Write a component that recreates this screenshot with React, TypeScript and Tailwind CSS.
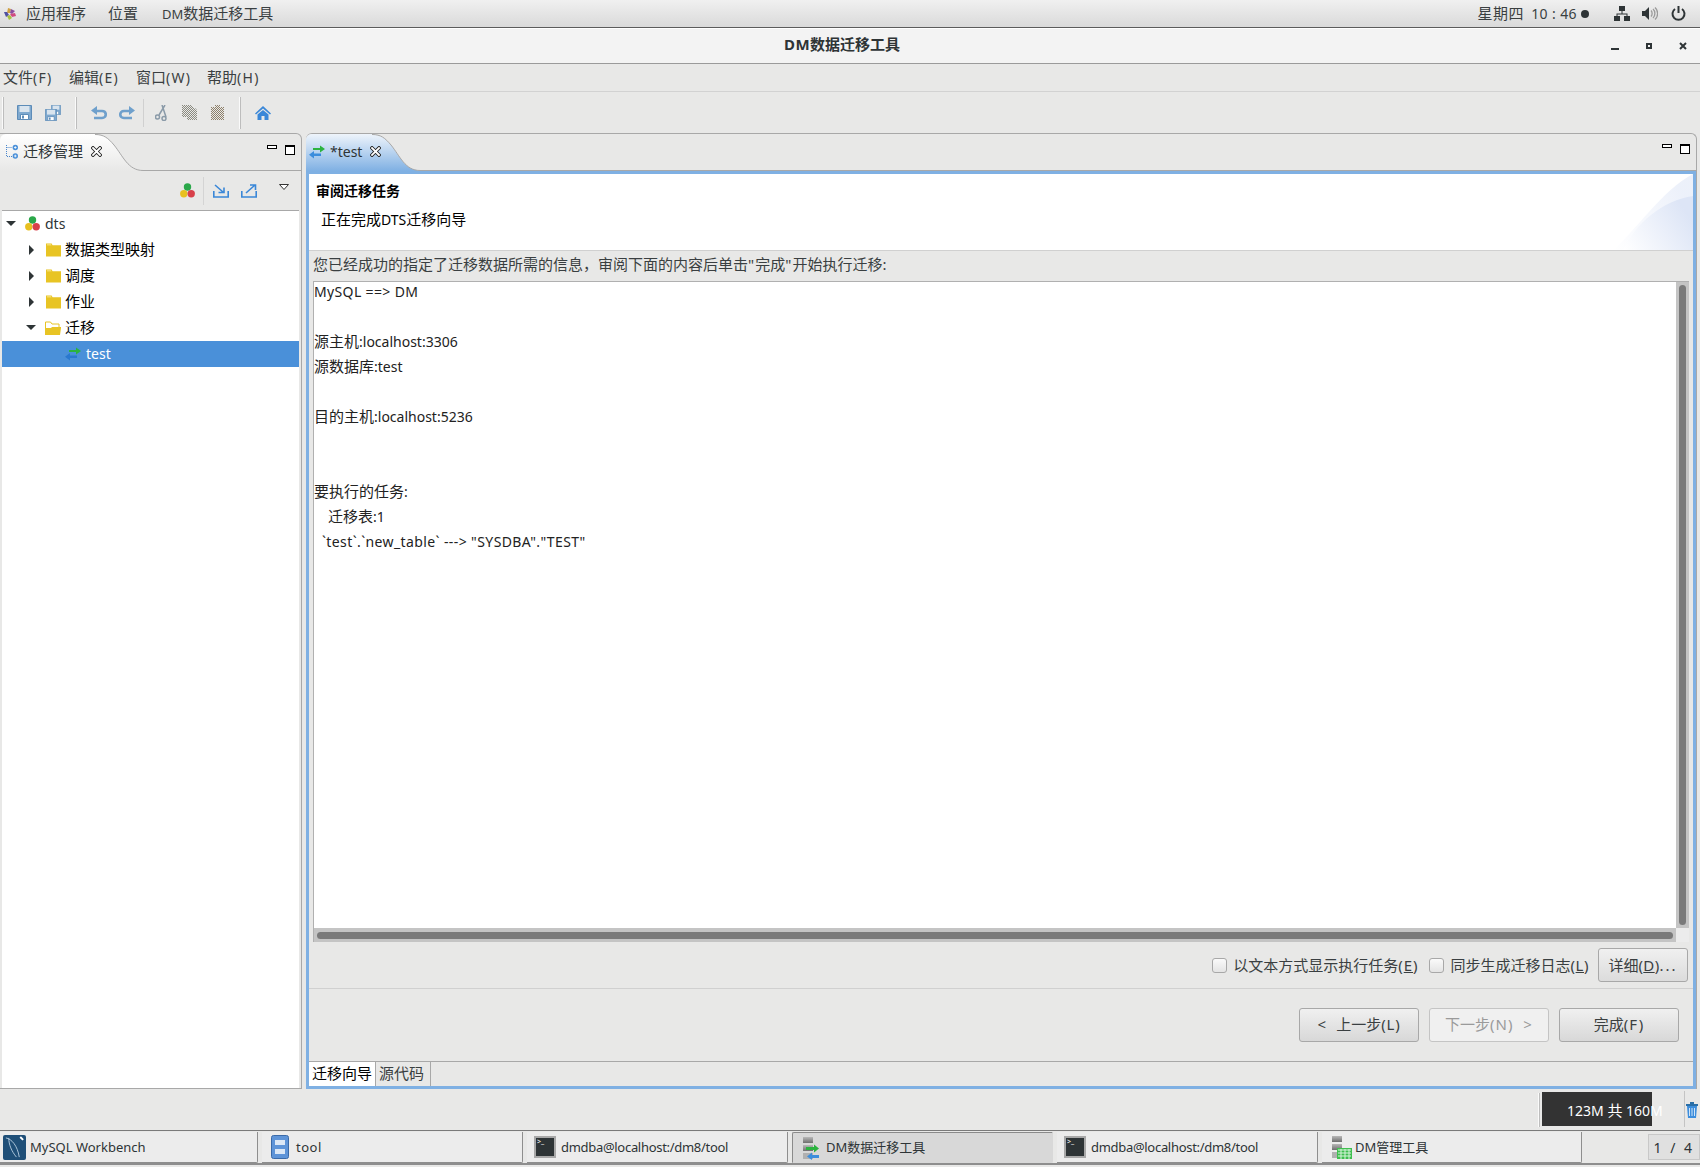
import React from "react";

const FONT = "[font-family:'Noto_Sans','Noto_Sans_CJK_SC',sans-serif]";

function Mix({ text, cjk = "text-[15px]", latin = "" }: { text: string; cjk?: string; latin?: string }) {
  const parts = text.split(/([\u3000-\u9fff\uff00-\uffef]+)/);
  return (
    <>
      {parts.map((p, i) =>
        /[\u3000-\u9fff\uff00-\uffef]/.test(p) ? (
          <span key={i} className={cjk}>{p}</span>
        ) : (
          <span key={i} className={latin}>{p}</span>
        )
      )}
    </>
  );
}

const Arrows = ({ className = "", blue = "#3c8ddc" }: { className?: string; blue?: string }) => (
  <svg viewBox="0 0 16 14" className={className}>
    <path d="M4 3h7V.4L16 4l-5 3.600V5H4z" fill="#2bb33f" />
    <path d="M12 8.600H5V6L0 9.800l5 3.800V11h7z" fill={blue} />
  </svg>
);

const Dots = ({ className = "" }: { className?: string }) => (
  <svg viewBox="0 0 15 15" className={className}>
    <circle cx="7.500" cy="4" r="3.700" fill="#2ba84a" />
    <circle cx="3.800" cy="10.800" r="3.700" fill="#e8c020" />
    <circle cx="11.200" cy="10.800" r="3.700" fill="#d8404a" />
  </svg>
);

const Folder = ({ open }: { open?: boolean }) =>
  open ? (
    <svg viewBox="0 0 16 14" className="w-[16px] h-[14px] shrink-0">
      <path d="M.5 13.500V1h5l1.500 2h7v3" fill="#fff" stroke="#e8c424" />
      <path d="M0 14V7h6l1-1h9v1l-1 7z" fill="#e8c424" />
    </svg>
  ) : (
    <svg viewBox="0 0 16 14" className="w-[15px] h-[14px] shrink-0">
      <path d="M0 14V0h6l1 2h9v12z" fill="#e8c424" />
      <path d="M1 1h4.400l.5 1H1z" fill="#fff3b0" />
    </svg>
  );

const Save = ({ className = "" }: { className?: string }) => (
  <svg viewBox="0 0 15 15" className={className}>
    <path d="M.5.5h14v14H.5z" fill="#7fa9cf" stroke="#5d8cb8" />
    <path d="M2.500 1h10v6h-10z" fill="#d9e4ee" />
    <path d="M3.500 9.500h8v5h-8z" fill="#fff" stroke="#5d8cb8" />
    <path d="M5 10.500h2v3H5z" fill="#5d8cb8" />
  </svg>
);

const Dither = ({ id, color }: { id: string; color: string }) => (
  <defs>
    <pattern id={id} width="2" height="2" patternUnits="userSpaceOnUse">
      <rect width="1" height="1" fill={color} />
      <rect x="1" y="1" width="1" height="1" fill={color} />
    </pattern>
  </defs>
);

const Min = () => <span className="block w-[10px] h-[4px] border border-black bg-white" />;
const Max = () => (
  <span className="block w-[10px] h-[10px] border border-black border-t-[2px] bg-white" />
);

const CloseX = () => (
  <svg viewBox="0 0 11 11" className="block w-[11px] h-[11px]">
    <path d="M2 2l7 7M9 2L2 9" stroke="#222" strokeWidth="3.600" strokeLinecap="square" />
    <path d="M2 2l7 7M9 2L2 9" stroke="#fff" strokeWidth="1.800" strokeLinecap="square" />
  </svg>
);

const Sep = ({ className = "" }: { className?: string }) => (
  <span className={`block w-[2px] bg-[#fafafa] border-r border-[#bdbdbd] ${className}`} />
);

const CURVE_FILL = "M0 .5C9 .5 13 4 19 11C28 22 33 36.500 48 36.500V37H0z";
const CURVE_LINE = "M0 .5C9 .5 13 4 19 11C28 22 33 36.500 48 36.500";

function Tree() {
  const folders = ["数据类型映射", "调度", "作业"];
  const row = "h-[26px] flex items-center pb-[1px]";
  return (
    <div className="flex-1 bg-white mx-[2px] text-[#2e3436]">
      <div className={`${row} pl-[4px]`}>
        <span className="w-0 h-0 border-x-[5px] border-x-transparent border-t-[5px] border-t-[#2e3436]" />
        <Dots className="w-[15px] h-[15px] ml-[9px]" />
        <span className="ml-[5px] text-[14px]">dts</span>
      </div>
      {folders.map((f) => (
        <div key={f} className={`${row} pl-[27px]`}>
          <span className="w-0 h-0 border-y-[5px] border-y-transparent border-l-[5px] border-l-[#2e3436]" />
          <span className="ml-[12px]"><Folder /></span>
          <span className="ml-[4px] text-[15px] text-black">{f}</span>
        </div>
      ))}
      <div className={`${row} pl-[24px]`}>
        <span className="w-0 h-0 border-x-[5px] border-x-transparent border-t-[5px] border-t-[#2e3436]" />
        <span className="ml-[9px]"><Folder open /></span>
        <span className="ml-[4px] text-[15px] text-black">迁移</span>
      </div>
      <div className="h-[26px] flex items-center pl-[63px] pb-[1px] bg-[#4a90d9]">
        <Arrows className="w-[16px] h-[14px]" blue="#2a78cf" />
        <span className="ml-[5px] text-[14px] text-white">test</span>
      </div>
    </div>
  );
}

function TaskBtn({
  w,
  active,
  icon,
  label,
  latin = "",
  gap = "ml-[4px]",
}: {
  w: string;
  active?: boolean;
  icon: React.ReactNode;
  label: string;
  latin?: string;
  gap?: string;
}) {
  return (
    <div
      className={`${w} h-[31px] shrink-0 flex items-center pl-[3px] text-[13px] text-[#2e3436] border-r border-b rounded-br-[2px] ${
        active ? "bg-[#d8d8d8] border-[#d8d8d8] border-l-[#8a8a8a] border-l border-t border-t-[#8a8a8a] rounded-tl-[2px]" : "bg-[#ececec] border-[#8e8e8e]"
      }`}
    >
      {icon}
      <span className={`${gap} pt-[1px]`}><Mix text={label} cjk="text-[13px]" latin={latin} /></span>
    </div>
  );
}

const Term = () => (
  <span className="block w-[22px] h-[22px] ml-[4px] bg-[#2e3436] border-[2px] border-[#a8a8a8] text-[7px] leading-[8px] text-white pl-[1px]">&gt;_</span>
);

const Stack = ({ overlay }: { overlay: React.ReactNode }) => (
  <span className="block w-[24px] h-[24px] ml-[4px]">
    <svg viewBox="0 0 24 24" className="w-[24px] h-[24px]">
      <defs>
        <linearGradient id="stk" x1="0" y1="0" x2="0" y2="1">
          <stop offset="0" stopColor="#b8b8b8" />
          <stop offset="1" stopColor="#6e6e6e" />
        </linearGradient>
      </defs>
      <rect x="3" y="1" width="10" height="6" fill="url(#stk)" />
      <rect x="3" y="9" width="10" height="6" fill="url(#stk)" />
      <rect x="3" y="17" width="10" height="6" fill="#b0b0b0" />
      {overlay}
    </svg>
  </span>
);

export default function App() {
  const lines: [string, string, string][] = [
    ["MySQL ==> DM", "", "tracking-[0.36px]"],
    ["", "", ""],
    ["源主机:localhost:3306", "", ""],
    ["源数据库:test", "", ""],
    ["", "", ""],
    ["目的主机:localhost:5236", "", ""],
    ["", "", ""],
    ["", "", ""],
    ["要执行的任务:", "", ""],
    ["迁移表:1", "pl-[14px]", ""],
    ["`test`.`new_table` ---> \"SYSDBA\".\"TEST\"", "pl-[8px]", "tracking-[0.4px]"],
  ];
  return (
    <div className={`w-[1700px] h-[1167px] overflow-hidden flex flex-col bg-[#e8e8e7] text-[14px] text-[#2e3436] ${FONT}`}>
      {/* GNOME top bar */}
      <div className="h-[28px] shrink-0 flex items-center bg-gradient-to-b from-[#f0f0f0] to-[#dadada] border-b border-[#5c5c5c] text-[15px] text-[#3a3f41]">
        <svg viewBox="0 0 14 14" className="w-[14px] h-[14px] ml-[3px]">
          <path d="M5 1l3 1-1 4H4z" fill="#d0a040" />
          <path d="M8 2l4 2-3 3-2-1z" fill="#8a4ea0" />
          <path d="M1 5l3 0 2 3-3 2z" fill="#5050a0" />
          <path d="M7 7l5-1 1 3-4 1z" fill="#d04a80" />
          <path d="M4 9l3-1 2 3-3 2z" fill="#a8c040" />
        </svg>
        <span className="ml-[9px]">应用程序</span>
        <span className="ml-[22px]">位置</span>
        <span className="ml-[24px]"><span className="text-[13px]">DM</span>数据迁移工具</span>
        <div className="ml-auto flex items-center">
          <span className="tracking-[0.5px]">星期四</span>
          <span className="ml-[7px] text-[14px] tracking-[0.4px] whitespace-pre">{"10 : 46"}</span>
          <span className="ml-[4px] w-[8px] h-[8px] rounded-full bg-[#2e3436]" />
          <svg viewBox="0 0 16 15" className="w-[16px] h-[15px] ml-[25px]" fill="#2e3436">
            <path d="M5 0h6v5H5zM0 10h6v5H0zM10 10h6v5h-6z" />
            <path d="M7.500 5h1v2.500H13.500V10h-1V8.500h-9V10h-1V7.500h5z" />
          </svg>
          <svg viewBox="0 0 16 15" className="w-[16px] h-[15px] ml-[12px]">
            <path d="M0 5h3l4-4v13l-4-4H0z" fill="#2e3436" />
            <path d="M9 4.500c1.500 1.500 1.500 4.500 0 6M11 3c2.500 2 2.500 7 0 9M13 1.500c3.500 3 3.500 9 0 12" fill="none" stroke="#9a9a9a" strokeWidth="1.300" />
          </svg>
          <svg viewBox="0 0 15 15" className="w-[15px] h-[15px] ml-[13px] mr-[14px]" fill="none" stroke="#2e3436" strokeWidth="2">
            <path d="M4 3a6 6 0 1 0 7 0" />
            <path d="M7.500 0v7" />
          </svg>
        </div>
      </div>

      {/* title bar */}
      <div className="h-[36px] shrink-0 flex items-center justify-center relative bg-[#f3f3f3] border-t border-white border-b border-b-[#9a9a9a] text-[15px] font-bold text-[#2e3436] pb-[3px]">
        <span className="ml-[-16px]"><Mix text="DM数据迁移工具" latin="tracking-[0.5px]" /></span>
        <div className="absolute right-[13px] top-[13px] flex items-center">
          <span className="block w-[8px] h-[2px] mt-[6px] bg-[#2e3436]" />
          <span className="block w-[6px] h-[6px] ml-[27px] border-[2px] border-[#2e3436]" />
          <svg viewBox="0 0 8 8" className="w-[8px] h-[8px] ml-[27px]"><path d="M1 1l6 6M7 1L1 7" stroke="#2e3436" strokeWidth="2" /></svg>
        </div>
      </div>

      {/* menu bar */}
      <div className="h-[28px] shrink-0 flex items-center border-b border-[#d2d2d2] pl-[3px] text-[#3a3f41]">
        <span className="w-[66px]"><Mix text="文件(F)" latin="tracking-[1.3px]" /></span>
        <span className="w-[67px]"><Mix text="编辑(E)" latin="tracking-[1.3px]" /></span>
        <span className="w-[71px]"><Mix text="窗口(W)" latin="tracking-[1.3px]" /></span>
        <span><Mix text="帮助(H)" latin="tracking-[1.3px]" /></span>
      </div>

      {/* toolbar */}
      <div className="h-[41px] shrink-0 flex items-center">
        <Sep className="ml-[2px] h-[32px]" />
        <Save className="w-[15px] h-[15px] ml-[13px]" />
        <span className="relative block w-[16px] h-[16px] ml-[13px]">
          <Save className="absolute right-0 top-0 w-[10px] h-[10px]" />
          <Save className="absolute left-0 bottom-0 w-[12px] h-[12px]" />
        </span>
        <Sep className="ml-[14px] h-[32px]" />
        <svg viewBox="0 0 16 14" className="w-[16px] h-[14px] ml-[14px]" fill="none">
          <path d="M3 5h8c5 0 5 7 0 7H3" stroke="#6fa0cc" strokeWidth="2.600" />
          <path d="M6 0v9L0 4.500z" fill="#6fa0cc" />
        </svg>
        <svg viewBox="0 0 16 14" className="w-[16px] h-[14px] ml-[12px]" fill="none">
          <path d="M13 5H5c-5 0-5 7 0 7h8" stroke="#6fa0cc" strokeWidth="2.600" />
          <path d="M10 0v9l6-4.500z" fill="#6fa0cc" />
        </svg>
        <span className="block w-[1px] h-[28px] ml-[8px] bg-[#d0d0d0]" />
        <svg viewBox="0 0 12 16" className="w-[12px] h-[16px] ml-[11px]" fill="none" stroke="#8a9aa8" strokeWidth="1.500">
          <path d="M10 0L4 10M7 0l4 12" />
          <circle cx="2.500" cy="12" r="2" />
          <circle cx="9" cy="13.500" r="2" />
        </svg>
        <svg viewBox="0 0 15 15" className="w-[15px] h-[15px] ml-[15px]">
          <Dither id="cp" color="#8a8a80" />
          <path d="M0 0h9l2 2v10H0z" fill="url(#cp)" />
          <path d="M5 3h8l2 2v10H5z" fill="url(#cp)" />
        </svg>
        <svg viewBox="0 0 13 15" className="w-[13px] h-[15px] ml-[14px]">
          <Dither id="pt" color="#8e806a" />
          <path d="M0 2h4V0h5v2h4v13H0z" fill="url(#pt)" />
        </svg>
        <Sep className="ml-[15px] h-[32px]" />
        <svg viewBox="0 0 16 14" className="w-[16px] h-[14px] ml-[14px]" fill="#3a87d8">
          <path d="M8 0L0 7.500l1 1L8 2.500l7 6 1-1z" />
          <path d="M2.500 8.500L8 4l5.500 4.500V14H9.500V10h-3v4h-4z" />
        </svg>
      </div>

      {/* panels */}
      <div className="flex-1 min-h-0 flex">
        {/* left */}
        <div className="w-[302px] shrink-0 flex flex-col border-r border-t border-b border-[#a8a8a8] rounded-tr-[6px]">
          <div className="h-[37px] shrink-0 flex">
            <div className="w-[95px] shrink-0 relative z-10 bg-gradient-to-b from-white to-[#e8e8e7] rounded-tl-[6px] flex items-center pl-[5px] pb-[2px]">
              <svg viewBox="0 0 13 15" className="w-[13px] h-[15px] shrink-0">
                <path d="M1.500 1v11.500h6M1.500 3.500h6" fill="none" stroke="#4a86cc" strokeDasharray="1 1" />
                <circle cx="10.300" cy="3.500" r="2.700" fill="#4a90d9" />
                <circle cx="10.300" cy="12" r="2.700" fill="#4a90d9" />
                <path d="M9 3.500h2.600M10.300 2.200v2.600M9 12h2.600M10.300 10.700v2.600" stroke="#fff" strokeWidth="0.800" />
              </svg>
              <span className="ml-[5px] text-[15px] whitespace-nowrap shrink-0">迁移管理</span>
              <span className="ml-[8px] shrink-0"><CloseX /></span>
            </div>
            <svg viewBox="0 0 48 37" className="w-[48px] h-[37px] shrink-0">
              <defs>
                <linearGradient id="lt" x1="0" y1="0" x2="0" y2="1">
                  <stop offset="0" stopColor="#ffffff" />
                  <stop offset="1" stopColor="#e8e8e7" />
                </linearGradient>
              </defs>
              <path d={CURVE_FILL} fill="url(#lt)" />
              <path d={CURVE_LINE} fill="none" stroke="#a8a8a8" />
            </svg>
            <div className="flex-1 border-b border-[#a8a8a8] flex justify-end items-start pt-[11px] pr-[6px] gap-[8px]">
              <Min />
              <Max />
            </div>
          </div>
          <div className="h-[40px] shrink-0 flex items-center pl-[178px] ml-[2px] mr-[2px] border-b border-[#a8a8a8]">
            <Dots className="w-[15px] h-[15px]" />
            <span className="block w-px h-[28px] bg-[#d4d4d4] ml-[8px]" />
            <svg viewBox="0 0 16 14" className="w-[16px] h-[14px] ml-[9px]" fill="none" stroke="#3a87d8" strokeWidth="1.600">
              <path d="M.8 7v6h14.400V7M2 1l8 7M11 3.500V8.500H5.500" />
            </svg>
            <svg viewBox="0 0 16 14" className="w-[16px] h-[14px] ml-[12px]" fill="none" stroke="#3a87d8" strokeWidth="1.600">
              <path d="M.8 7v6h14.400V7M5 9l9-8M9 1h5.500v5" />
            </svg>
            <svg viewBox="0 0 10 6" className="w-[10px] h-[6px] ml-[22px] mb-[8px]">
              <path d="M.5.5h9L5 5.500z" fill="#fff" stroke="#333" />
            </svg>
          </div>
          <Tree />
        </div>

        {/* right */}
        <div className="w-[1391px] ml-[4px] shrink-0 flex flex-col border-t border-r border-[#a8a8a8] rounded-t-[6px]">
          <div className="h-[37px] shrink-0 flex">
            <div className="w-[66px] shrink-0 relative z-10 bg-gradient-to-b from-[#eef4fb] to-[#7fb0e3] rounded-tl-[6px] flex items-center pl-[3px] pb-[2px]">
              <Arrows className="w-[16px] h-[14px] shrink-0" />
              <span className="ml-[5px] shrink-0">*test</span>
              <span className="ml-[8px] shrink-0"><CloseX /></span>
            </div>
            <svg viewBox="0 0 48 37" className="w-[48px] h-[37px] shrink-0">
              <defs>
                <linearGradient id="tb" x1="0" y1="0" x2="0" y2="1">
                  <stop offset="0" stopColor="#eef4fb" />
                  <stop offset="1" stopColor="#7fb0e3" />
                </linearGradient>
              </defs>
              <path d={CURVE_FILL} fill="url(#tb)" />
              <path d={CURVE_LINE} fill="none" stroke="#a8a8a8" />
            </svg>
            <div className="flex-1 border-b border-[#a8a8a8] flex justify-end items-start pt-[10px] pr-[6px] gap-[8px]">
              <Min />
              <Max />
            </div>
          </div>
          <div className="flex-1 min-h-0 flex flex-col border-[3px] border-[#7fb0e3]">
            {/* wizard banner */}
            <div className="h-[77px] shrink-0 relative overflow-hidden bg-white border-b border-[#d0d0d0] pt-[7px] pl-[7px] text-black">
              <div className="text-[14px] font-bold leading-[20px]">审阅迁移任务</div>
              <div className="mt-[8px] pl-[5px] leading-[20px]"><Mix text="正在完成DTS迁移向导" /></div>
              <svg viewBox="0 0 80 76" className="absolute right-0 top-0 w-[80px] h-[76px]">
                <defs>
                  <linearGradient id="bn" x1="0" y1="1" x2="1" y2="0.500">
                    <stop offset="0" stopColor="#ffffff" />
                    <stop offset="1" stopColor="#dde5f6" />
                  </linearGradient>
                </defs>
                <path d="M0 76C20 60 50 15 80 0v76z" fill="url(#bn)" opacity="0.550" />
                <path d="M10 76C22 50 50 26 80 22v54z" fill="url(#bn)" />
              </svg>
            </div>
            <div className="h-[30px] shrink-0 flex items-center pl-[4px] pb-[3px] text-[#3a3f41]">
              <span className="text-[15px]"><Mix text={'您已经成功的指定了迁移数据所需的信息，审阅下面的内容后单击"完成"开始执行迁移:'} latin="tracking-[1.1px]" /></span>
            </div>
            {/* text + scrollbars */}
            <div className="flex-1 min-h-0 ml-[4px] mr-[4px] flex flex-col border-t border-l border-[#b0b0b0]">
              <div className="flex-1 min-h-0 flex">
                <div className="flex-1 bg-white overflow-hidden text-[#222]">
                  <div className="leading-[25px] -mt-[3px]">
                    {lines.map(([t, c, l], i) => (
                      <div key={i} className={`h-[25px] ${c}`}>
                        <Mix text={t} latin={l} />
                      </div>
                    ))}
                  </div>
                </div>
                <div className="w-[13px] bg-[#c4c4c4] flex justify-center pt-[3px] pb-[3px]">
                  <span className="block w-[7px] h-full rounded-full bg-[#7a7a7a]" />
                </div>
              </div>
              <div className="h-[14px] shrink-0 flex">
                <div className="flex-1 bg-[#c4c4c4] flex items-center px-[3px]">
                  <span className="block h-[7px] w-full rounded-full bg-[#7a7a7a]" />
                </div>
                <div className="w-[13px] bg-[#ececec]" />
              </div>
            </div>
            {/* options */}
            <div className="h-[47px] shrink-0 flex items-center justify-end pr-[5px] border-b border-[#d0d0d0] text-[#3a3f41] text-[15px]">
              <span className="block w-[15px] h-[15px] rounded-[3px] border border-[#a8a8a8] bg-gradient-to-b from-[#fafafa] to-[#e4e4e4]" />
              <span className="ml-[6px]">以文本方式显示执行任务<span className="tracking-[1px]">(<u>E</u>)</span></span>
              <span className="block w-[15px] h-[15px] ml-[10px] rounded-[3px] border border-[#a8a8a8] bg-gradient-to-b from-[#fafafa] to-[#e4e4e4]" />
              <span className="ml-[7px]">同步生成迁移日志<span className="tracking-[0.5px]">(<u>L</u>)</span></span>
              <span className="flex items-center justify-center w-[90px] h-[34px] ml-[9px] rounded-[3px] border border-[#a8a8a8] bg-gradient-to-b from-[#f0f0f0] to-[#dcdcdc]">详细<span className="tracking-[0.4px]">(<u>D</u>)</span><span className="tracking-[2px]">...</span></span>
            </div>
            {/* nav buttons */}
            <div className="h-[73px] shrink-0 flex items-center justify-end gap-[10px] pr-[14px] pb-[1px] text-[15px] text-[#3a3f41] border-b border-[#a8a8a8]">
              <span className="flex items-center justify-center w-[120px] h-[34px] rounded-[3px] border border-[#a8a8a8] bg-gradient-to-b from-[#f0f0f0] to-[#d8d8d8] whitespace-pre"><Mix text="<  上一步(L)" latin="tracking-[0.8px]" /></span>
              <span className="flex items-center justify-center w-[120px] h-[34px] rounded-[3px] border border-[#c4c4c4] bg-[#f0f0f0] text-[#9a9a9a] whitespace-pre"><Mix text="下一步(N)  >" latin="tracking-[1px]" /></span>
              <span className="flex items-center justify-center w-[120px] h-[34px] rounded-[3px] border border-[#a8a8a8] bg-gradient-to-b from-[#f0f0f0] to-[#d8d8d8]"><Mix text="完成(F)" latin="tracking-[1.2px]" /></span>
            </div>
            {/* source tabs */}
            <div className="h-[24px] shrink-0 flex text-[15px] leading-[22px]">
              <span className="w-[66px] bg-white text-black pl-[3px]">迁移向导</span>
              <span className="w-[56px] border-r border-l border-[#a8a8a8] pl-[3px] text-[#3a3f41]">源代码</span>
            </div>
          </div>
        </div>
      </div>

      {/* status bar */}
      <div className="h-[42px] shrink-0 flex items-center border-b border-[#7a7a7a]">
        <Sep className="ml-[1538px] h-[34px]" />
        <div className="ml-[2px] w-[143px] h-[36px] flex items-center relative border-r border-[#c4c4c4] mt-[-1px]">
          <span className="block w-[110px] h-[34px] bg-[#333333]" />
          <span className="absolute left-[25px] top-[8px] text-[14px] text-white whitespace-nowrap"><Mix text="123M 共 160M" /></span>
        </div>
        <svg viewBox="0 0 12 16" className="w-[12px] h-[16px] ml-[1px]">
          <path d="M0 2h12v2H0z" fill="#2a6fa8" />
          <path d="M4 0h4v2H4z" fill="#2a6fa8" />
          <path d="M1 4h10l-1 12H2z" fill="#3c8ddc" />
          <path d="M3.500 6v8M6 6v8M8.500 6v8" stroke="#cfe4f8" />
        </svg>
      </div>

      {/* task bar */}
      <div className="h-[36px] shrink-0">
        <div className="h-[34px] flex items-start pt-[1px] gap-[4px] border-b-[2px] border-[#8e8e8e]">
          <TaskBtn
            w="w-[258px]"
            label="MySQL Workbench"
            icon={
              <svg viewBox="0 0 24 26" className="w-[23px] h-[25px] shrink-0">
                <rect width="24" height="26" rx="2" fill="#1f4f78" />
                <path d="M3 3c6 1 12 8 14 20M6 3c0 7 3 14 8 20" fill="none" stroke="#b0c8dc" strokeWidth="1" />
                <path d="M18 2l3 3" stroke="#fff" strokeWidth="2" />
              </svg>
            }
          />
          <TaskBtn
            w="w-[261px]"
            label="tool"
            gap="ml-[7px]"
            latin="tracking-[0.5px]"
            icon={
              <svg viewBox="0 0 18 24" className="w-[18px] h-[24px] ml-[6px] shrink-0">
                <rect x="0.500" y="0.500" width="17" height="23" rx="2" fill="#5e94d8" stroke="#3a6aa8" />
                <rect x="4" y="5" width="10" height="5" fill="#dce8f6" />
                <rect x="4" y="14" width="10" height="5" fill="#dce8f6" />
              </svg>
            }
          />
          <TaskBtn w="w-[261px]" label="dmdba@localhost:/dm8/tool" latin="tracking-[-0.3px]" gap="ml-[5px]" icon={<Term />} />
          <TaskBtn
            w="w-[261px]"
            active
            label="DM数据迁移工具"
            gap="ml-[2px]"
            icon={
              <Stack
                overlay={
                  <>
                    <path d="M6 11h8V8.500L19 12.500l-5 4V14H6z" fill="#2bb33f" />
                    <path d="M19 19h-7v-2.500L7 20.500l5 3.500V22h7z" fill="#3c8ddc" />
                  </>
                }
              />
            }
          />
          <TaskBtn w="w-[261px]" label="dmdba@localhost:/dm8/tool" latin="tracking-[-0.3px]" gap="ml-[5px]" icon={<Term />} />
          <TaskBtn
            w="w-[260px]"
            label="DM管理工具"
            gap="ml-[2px]"
            icon={
              <Stack
                overlay={
                  <g>
                    <rect x="8" y="13" width="15" height="11" fill="#3fbf4f" />
                    <path d="M9 15h13M9 18h13M9 21h13M12 14v10M16 14v10M20 14v10" stroke="#d8f4dc" strokeWidth="1" />
                  </g>
                }
              />
            }
          />
          <div className="ml-[62px] mt-[2px] w-[54px] h-[26px] flex items-center justify-center bg-[#e0e0e0] border border-[#c8c8c8] text-[14px] tracking-[2.500px]">
            1 / 4
          </div>
        </div>
      </div>
    </div>
  );
}
